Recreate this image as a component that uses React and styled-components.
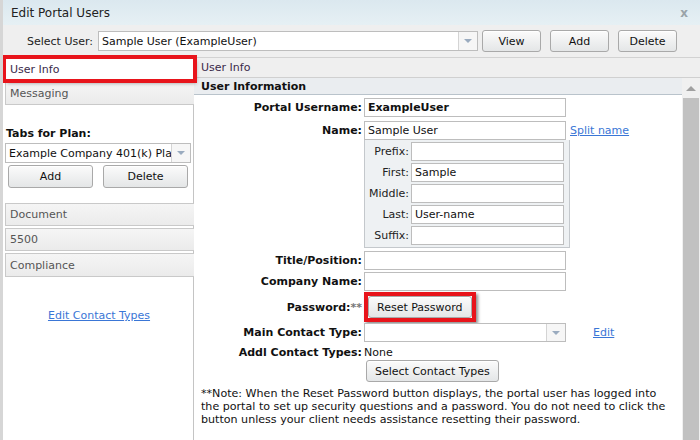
import React from 'react';
import styled, { createGlobalStyle } from 'styled-components';

const GlobalStyle = createGlobalStyle`
  body {
    margin: 0;
    background: #fff;
    font-family: "DejaVu Sans", Verdana, sans-serif;
    font-size: 11px;
    color: #111;
  }
`;

const Dialog = styled.div`
  width: 700px;
  height: 440px;
  display: flex;
  flex-direction: column;
  box-sizing: border-box;
  border-left: 3px solid #d6d6d6;
  overflow: hidden;
  background: #fff;
`;

const TitleBar = styled.div`
  height: 25px;
  flex: none;
  display: flex;
  align-items: center;
  justify-content: space-between;
  padding: 0 12px 0 8px;
  background: linear-gradient(#dbe8ef, #e6f0f4);
  font-size: 12px;
  color: #222;
`;

const Close = styled.span`
  color: #9aa3a8;
  font-weight: bold;
  font-size: 12px;
`;

const Toolbar = styled.div`
  height: 32px;
  flex: none;
  display: flex;
  align-items: center;
  padding-left: 22px;
  background: #efefef;
  border-bottom: 1px solid #d2d2d2;
  font-size: 11px;
`;

const ToolLabel = styled.span`
  width: 73px;
  flex: none;
  white-space: nowrap;
  text-align: right;
  padding-right: 5px;
  box-sizing: border-box;
  color: #222;
`;

const SelectBox = styled.div`
  width: ${p => p.$w}px;
  height: ${p => p.$h || 20}px;
  box-sizing: border-box;
  border: 1px solid #bdbdbd;
  background: #fff;
  display: flex;
  align-items: center;
  font-size: 11px;
  color: #111;
  flex: none;
`;

const SelectText = styled.span`
  flex: 1;
  padding-left: 3px;
  white-space: nowrap;
  overflow: hidden;
`;

const Arrow = styled.span`
  width: 18px;
  flex: none;
  align-self: stretch;
  border-left: 1px solid #d4d4d4;
  background: #f6f6f6;
  display: flex;
  align-items: center;
  justify-content: center;
  &::after {
    content: '';
    border-left: 4px solid transparent;
    border-right: 4px solid transparent;
    border-top: 4px solid #9aabbf;
  }
`;

const Button = styled.button`
  width: ${p => (p.$w ? p.$w + 'px' : 'auto')};
  height: ${p => p.$h || 22}px;
  margin-left: ${p => p.$ml || 0}px;
  padding: 0 8px;
  box-sizing: border-box;
  border: 1px solid #a9a9a9;
  border-radius: 3px;
  background: linear-gradient(#fbfbfb, #e4e6e7);
  font-family: inherit;
  font-size: 11px;
  color: #111;
  flex: none;
  box-shadow: inset 0 1px 0 #fff;
`;

const Marker = styled.span`
  display: inline-flex;
  border: 4px solid #e8141b;
  box-shadow: 2px 2px 3px rgba(0, 0, 0, 0.45);
`;

const Body = styled.div`
  flex: 1;
  display: flex;
  min-height: 0;
`;

const Sidebar = styled.div`
  width: 188px;
  flex: none;
  border-right: 1px solid #c4c4c4;
  display: flex;
  flex-direction: column;
  padding-left: 2px;
`;

const Tab = styled.div`
  height: ${p => p.$h || 23}px;
  box-sizing: border-box;
  margin-top: ${p => p.$mt || 0}px;
  margin-right: -1px;
  border: 1px solid #c9c9c9;
  border-right: none;
  display: flex;
  align-items: center;
  padding-left: 4px;
  font-size: 11px;
  color: ${p => (p.$active ? '#3a2a4a' : '#555')};
  background: ${p => (p.$active ? '#fff' : 'linear-gradient(#f5f5f5, #ebebeb)')};
  ${p => p.$marked && `
    outline: 4px solid #e8141b;
    outline-offset: -1px;
    box-shadow: 2px 3px 4px rgba(0,0,0,0.4);
    position: relative;
    z-index: 2;
  `}
`;

const PlanLabel = styled.div`
  margin: 22px 0 3px 1px;
  font-weight: bold;
  font-size: 11px;
  color: #111;
`;

const PlanButtons = styled.div`
  display: flex;
  gap: 10px;
  padding-left: 3px;
  margin-top: 2px;
  margin-bottom: 15px;
`;

const LinkText = styled.a`
  color: #3a76d6;
  text-decoration: underline;
  font-size: 11px;
  cursor: pointer;
  margin-left: ${p => p.$ml || 0}px;
`;

const SideLink = styled.div`
  text-align: center;
  margin-top: 32px;
`;

const Main = styled.div`
  flex: 1;
  display: flex;
  flex-direction: column;
  min-width: 0;
`;

const MainHeader = styled.div`
  height: 20px;
  flex: none;
  box-sizing: border-box;
  background: #efefef;
  border-bottom: 1px solid #d0d0d0;
  display: flex;
  align-items: center;
  padding-left: 7px;
  font-size: 11px;
  color: #3a2a4a;
`;

const ScrollArea = styled.div`
  flex: 1;
  display: flex;
  min-height: 0;
`;

const Content = styled.div`
  flex: 1;
  min-width: 0;
`;

const SectionHead = styled.div`
  height: 17px;
  box-sizing: border-box;
  background: #eaedf0;
  border-bottom: 1px solid #b9c3cb;
  display: flex;
  align-items: center;
  padding-left: 7px;
  font-weight: bold;
  font-size: 11px;
  color: #111;
`;

const Scrollbar = styled.div`
  width: 18px;
  flex: none;
  background: #f0f0f0;
  display: flex;
  flex-direction: column;
  align-items: center;
`;

const ScrollUp = styled.div`
  height: 20px;
  display: flex;
  align-items: center;
  justify-content: center;
  &::after {
    content: '';
    border-left: 5px solid transparent;
    border-right: 5px solid transparent;
    border-bottom: 5px solid #a0a0a0;
  }
`;

const Thumb = styled.div`
  flex: 1;
  width: 16px;
  background: #c1c1c1;
`;

const Form = styled.div`
  padding-top: 3px;
`;

const Row = styled.div`
  display: flex;
  align-items: center;
  margin-top: ${p => p.$mt || 0}px;
`;

const Label = styled.span`
  width: 170px;
  flex: none;
  text-align: right;
  padding-right: 2px;
  box-sizing: border-box;
  font-weight: bold;
  font-size: 11px;
  color: #111;
  white-space: nowrap;
`;

const Input = styled.div`
  width: ${p => p.$w || 202}px;
  height: 19px;
  box-sizing: border-box;
  border: 1px solid #bdbdbd;
  background: #fff;
  display: flex;
  align-items: center;
  padding-left: 3px;
  font-size: 11px;
  font-weight: ${p => (p.$bold ? 'bold' : 'normal')};
  color: #111;
  flex: none;
`;

const SubBox = styled.div`
  margin-left: 170px;
  width: 206px;
  box-sizing: border-box;
  border: 1px solid #c4c8cc;
  border-top: none;
  background: #eef1f3;
  padding: 2px 0;
  display: flex;
  flex-direction: column;
  gap: 2px;
`;

const SubRow = styled.div`
  display: flex;
  align-items: center;
`;

const SubLabel = styled.span`
  width: 46px;
  text-align: right;
  padding-right: 2px;
  box-sizing: border-box;
  font-size: 11px;
  color: #222;
`;

const ValueText = styled.span`
  font-size: 11px;
  color: #111;
`;

const Note = styled.p`
  margin: 5px 0 0 7px;
  font-size: 11.1px;
  line-height: 13px;
  color: #111;
  white-space: nowrap;
`;

const Stars = styled.span`
  color: #777;
`;

const subFields = [
  ['Prefix:', ''],
  ['First:', 'Sample'],
  ['Middle:', ''],
  ['Last:', 'User-name'],
  ['Suffix:', ''],
];

const noteLines = [
  '**Note: When the Reset Password button displays, the portal user has logged into',
  'the portal to set up security questions and a password. You do not need to click the',
  'button unless your client needs assistance resetting their password.',
];

const App = () => {
  return (
    <>
      <GlobalStyle />
      <Dialog>
        <TitleBar>
          <span>Edit Portal Users</span>
          <Close>x</Close>
        </TitleBar>
        <Toolbar>
          <ToolLabel>Select User:</ToolLabel>
          <SelectBox $w={380}>
            <SelectText>Sample User (ExampleUser)</SelectText>
            <Arrow />
          </SelectBox>
          <Button $w={59} $ml={4}>View</Button>
          <Button $w={59} $ml={9}>Add</Button>
          <Button $w={59} $ml={9}>Delete</Button>
        </Toolbar>
        <Body>
          <Sidebar>
            <Tab $active $marked $h={22}>User Info</Tab>
            <Tab $mt={2} $h={23}>Messaging</Tab>
            <PlanLabel>Tabs for Plan:</PlanLabel>
            <SelectBox $w={186} $h={20}>
              <SelectText>Example Company 401(k) Plan</SelectText>
              <Arrow />
            </SelectBox>
            <PlanButtons>
              <Button $w={85} $h={23}>Add</Button>
              <Button $w={85} $h={23}>Delete</Button>
            </PlanButtons>
            <Tab>Document</Tab>
            <Tab $mt={2}>5500</Tab>
            <Tab $mt={2} $h={24}>Compliance</Tab>
            <SideLink>
              <LinkText>Edit Contact Types</LinkText>
            </SideLink>
          </Sidebar>
          <Main>
            <MainHeader>User Info</MainHeader>
            <ScrollArea>
              <Content>
                <SectionHead>User Information</SectionHead>
                <Form>
                  <Row>
                    <Label>Portal Username:</Label>
                    <Input $bold>ExampleUser</Input>
                  </Row>
                  <Row $mt={4}>
                    <Label>Name:</Label>
                    <Input>Sample User</Input>
                    <LinkText $ml={4}>Split name</LinkText>
                  </Row>
                  <SubBox>
                    {subFields.map(([label, value]) => (
                      <SubRow key={label}>
                        <SubLabel>{label}</SubLabel>
                        <Input $w={153}>{value}</Input>
                      </SubRow>
                    ))}
                  </SubBox>
                  <Row $mt={3}>
                    <Label>Title/Position:</Label>
                    <Input />
                  </Row>
                  <Row $mt={2}>
                    <Label>Company Name:</Label>
                    <Input />
                  </Row>
                  <Row $mt={1}>
                    <Label>
                      Password:<Stars>**</Stars>
                    </Label>
                    <Marker>
                      <Button>Reset Password</Button>
                    </Marker>
                  </Row>
                  <Row $mt={1}>
                    <Label>Main Contact Type:</Label>
                    <SelectBox $w={202} $h={19}>
                      <SelectText />
                      <Arrow />
                    </SelectBox>
                    <LinkText $ml={27}>Edit</LinkText>
                  </Row>
                  <Row $mt={4}>
                    <Label>Addl Contact Types:</Label>
                    <ValueText>None</ValueText>
                  </Row>
                  <Row $mt={1}>
                    <Label />
                    <Button $ml={2}>Select Contact Types</Button>
                  </Row>
                  <Note>
                    {noteLines.map((line, i) => (
                      <React.Fragment key={i}>
                        {line}
                        {i < noteLines.length - 1 && <br />}
                      </React.Fragment>
                    ))}
                  </Note>
                </Form>
              </Content>
              <Scrollbar>
                <ScrollUp />
                <Thumb />
              </Scrollbar>
            </ScrollArea>
          </Main>
        </Body>
      </Dialog>
    </>
  );
};

export default App;
